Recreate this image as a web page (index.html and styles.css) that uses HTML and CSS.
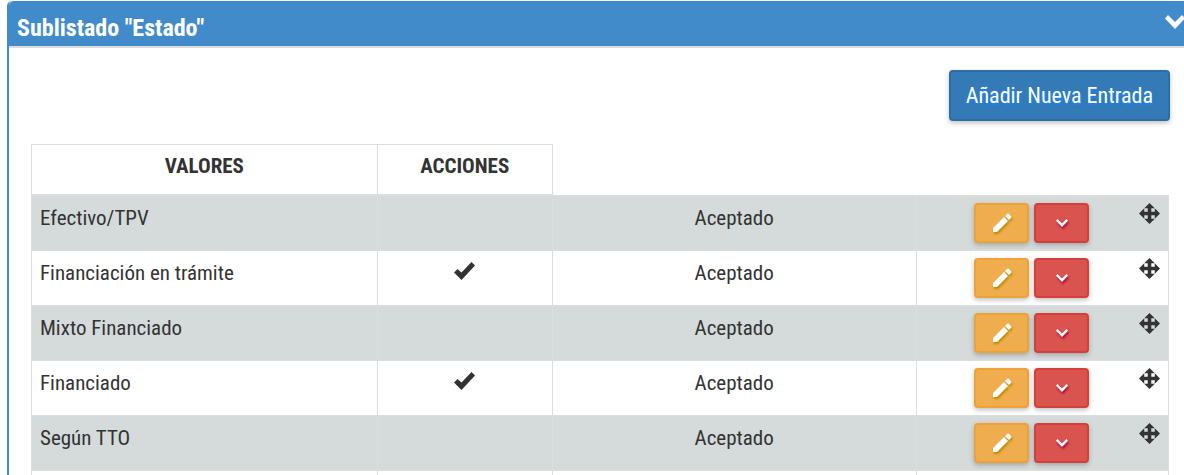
FILE: index.html
```html
<!DOCTYPE html>
<html lang="es">
<head>
<meta charset="utf-8">
<title>Sublistado "Estado"</title>
<link rel="stylesheet" href="styles.css">
</head>
<body>
<svg class="sprite" aria-hidden="true">
  <symbol id="pencil" viewBox="0 0 20 20"><path d="M1 19v-4L12 4l4 4L5 19zM13 3l2-2q1-1 2 0l2 2q1 1 0 2l-2 2z"/></symbol>
  <symbol id="chevron" viewBox="0 0 20 14"><path d="M3 0l7 7 7-7 3 3.500L10 14 0 3.500z"/></symbol>
  <symbol id="chevron-thin" viewBox="0 0 12 8"><path d="M1.500 0L6 4.500 10.500 0 12 1.800 6 8 0 1.800z"/></symbol>
  <symbol id="check" viewBox="0 0 21 18"><path d="M0 10.500L3.500 7 7.500 10.500 17.500 0 21 3.500 7.500 18z"/></symbol>
  <symbol id="move" viewBox="0 0 20 20"><path d="M10 0l5 5h-3.300v3.300H15V5l5 5-5 5v-3.300h-3.300V15H15l-5 5-5-5h3.300v-3.300H5V15l-5-5 5-5v3.300h3.300V5H5z"/></symbol>
</svg>
<section class="panel">
  <header class="panel-header">
    <h1 class="panel-title">Sublistado "Estado"</h1>
    <button class="collapse" type="button" aria-label="Contraer"><svg class="icon-collapse"><use href="#chevron"/></svg></button>
  </header>
  <div class="panel-body">
    <div class="toolbar"><button class="btn btn-primary" type="button">Añadir Nueva Entrada</button></div>
    <table class="table">
      <colgroup><col class="col-value"><col class="col-action"><col class="col-state"><col></colgroup>
      <thead><tr><th scope="col">VALORES</th><th scope="col">ACCIONES</th></tr></thead>
      <tbody>
        <tr><td>Efectivo/TPV</td><td class="center"></td><td class="center">Aceptado</td><td><div class="actions"><div class="buttons"><button class="btn btn-edit" type="button" aria-label="Editar"><svg class="icon-edit"><use href="#pencil"/></svg></button><button class="btn btn-more" type="button" aria-label="Desplegar"><svg class="icon-more"><use href="#chevron-thin"/></svg></button></div><svg class="icon-move"><use href="#move"/></svg></div></td></tr>
        <tr><td>Financiación en trámite</td><td class="center"><svg class="icon-check"><use href="#check"/></svg></td><td class="center">Aceptado</td><td><div class="actions"><div class="buttons"><button class="btn btn-edit" type="button" aria-label="Editar"><svg class="icon-edit"><use href="#pencil"/></svg></button><button class="btn btn-more" type="button" aria-label="Desplegar"><svg class="icon-more"><use href="#chevron-thin"/></svg></button></div><svg class="icon-move"><use href="#move"/></svg></div></td></tr>
        <tr><td>Mixto Financiado</td><td class="center"></td><td class="center">Aceptado</td><td><div class="actions"><div class="buttons"><button class="btn btn-edit" type="button" aria-label="Editar"><svg class="icon-edit"><use href="#pencil"/></svg></button><button class="btn btn-more" type="button" aria-label="Desplegar"><svg class="icon-more"><use href="#chevron-thin"/></svg></button></div><svg class="icon-move"><use href="#move"/></svg></div></td></tr>
        <tr><td>Financiado</td><td class="center"><svg class="icon-check"><use href="#check"/></svg></td><td class="center">Aceptado</td><td><div class="actions"><div class="buttons"><button class="btn btn-edit" type="button" aria-label="Editar"><svg class="icon-edit"><use href="#pencil"/></svg></button><button class="btn btn-more" type="button" aria-label="Desplegar"><svg class="icon-more"><use href="#chevron-thin"/></svg></button></div><svg class="icon-move"><use href="#move"/></svg></div></td></tr>
        <tr><td>Según TTO</td><td class="center"></td><td class="center">Aceptado</td><td><div class="actions"><div class="buttons"><button class="btn btn-edit" type="button" aria-label="Editar"><svg class="icon-edit"><use href="#pencil"/></svg></button><button class="btn btn-more" type="button" aria-label="Desplegar"><svg class="icon-more"><use href="#chevron-thin"/></svg></button></div><svg class="icon-move"><use href="#move"/></svg></div></td></tr>
        <tr><td></td><td></td><td></td><td></td></tr>
      </tbody>
    </table>
  </div>
</section>
</body>
</html>
```
FILE: styles.css
```css
* { box-sizing: border-box; }
body {
  margin: 0;
  padding: 1px 0 0 7px;
  overflow: hidden;
  background: #fff;
  color: #333;
  font: 21px/28px "Roboto Condensed", Roboto, sans-serif;
}
.sprite { display: none; }
svg { display: block; fill: currentColor; }
.panel {
  margin-right: -8px;
  border: 2px solid #428bca;
  border-top-width: 0;
  border-radius: 5px;
}
.panel-header {
  display: flex;
  justify-content: space-between;
  align-items: flex-start;
  padding: 13px 5px 4px 8px;
  background: #428bca;
  border-bottom: 2px solid #ddd;
  border-radius: 5px 5px 0 0;
  color: #fff;
}
.panel-title { margin: 0; font-size: 24px; line-height: 28px; font-weight: 700; }
.collapse { padding: 1px 0; border: 0; background: none; color: #fff; }
.icon-collapse { width: 20px; height: 14px; }
.panel-body { padding: 22px 20px 8px 22px; }
.toolbar { display: flex; justify-content: flex-end; margin-bottom: 23px; }
.btn {
  border: 2px solid;
  border-radius: 4px;
  color: #fff;
  font-family: inherit;
  box-shadow: 0 2px 5px rgba(0, 0, 0, .25);
}
.btn-primary {
  padding: 9px 15px;
  background: #337ab7;
  border-color: #2e6da4;
  font-size: 22px;
  line-height: 29px;
  text-shadow: 1px 2px 2px #1c86f2;
}
.table {
  width: calc(100% - 1px);
  border-collapse: collapse;
  table-layout: fixed;
}
.col-value { width: 30.4%; }
.col-action { width: 15.4%; }
.col-state { width: 32%; }
th { padding: 7px 8px 14px; border: 1px solid #ddd; border-bottom-width: 2px; font-weight: 700; }
td { height: 55px; padding: 8px; border: 1px solid #ddd; vertical-align: top; }
tbody tr:nth-child(odd) { background: #d5dbdb; }
.center { text-align: center; }
.actions { display: flex; margin-top: -1px; }
.buttons { flex: 1; display: flex; justify-content: center; gap: 5px; margin-bottom: -2px; }
.btn-edit, .btn-more {
  display: flex;
  align-items: center;
  justify-content: center;
  width: 55px;
  height: 40px;
  padding: 0;
}
.btn-edit { background: #f0ad4e; border-color: #eea236; }
.btn-more { background: #d9534f; border-color: #d43f3a; }
.icon-edit { width: 20px; height: 20px; overflow: visible; filter: drop-shadow(1px 2px 1px #b98b00); }
.icon-more { width: 12px; height: 8px; overflow: visible; filter: drop-shadow(1px 2px 1px #b0003a); }
.icon-check { width: 21px; height: 18px; margin: 3px auto 0; }
.icon-move { width: 21px; height: 21px; }
```
